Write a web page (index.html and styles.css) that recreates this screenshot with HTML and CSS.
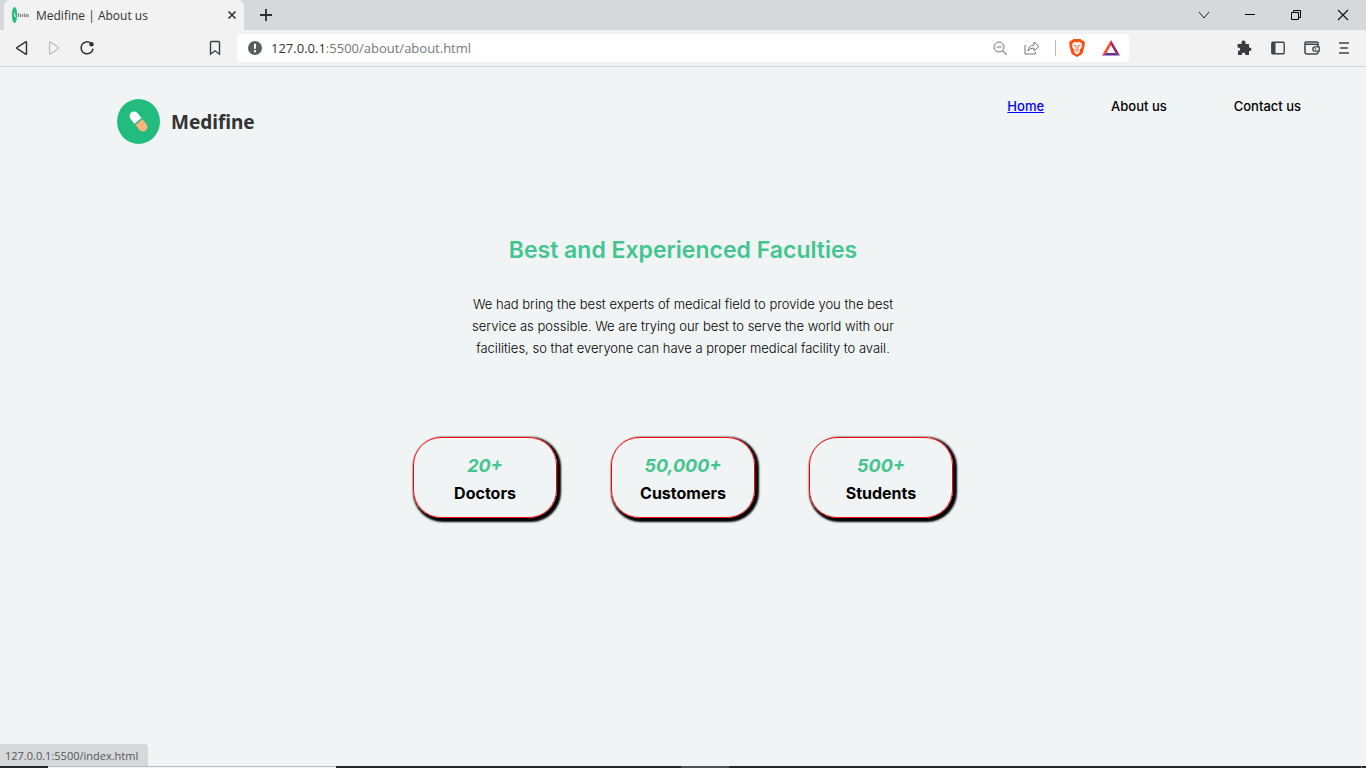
FILE: index.html
```html
<!DOCTYPE html>
<html lang="en">
<head>
<meta charset="utf-8">
<title>Medifine | About us</title>
<link rel="stylesheet" href="styles.css">
</head>
<body>
<div class="browser">
  <div class="tabstrip">
    <div class="tab">
      <svg class="favicon" width="18" height="18" viewBox="0 0 18 18"><ellipse cx="3.500" cy="9" rx="2.600" ry="8" fill="#22bd7e"/><path d="M3 7l1.500 4" stroke="#e9e7c4" stroke-width="1.200"/><path d="M7.500 7v4M9.500 8v3M11.500 8v3M13.500 7.500v3.500M15.500 8v3M17 8v3" stroke="#888" stroke-width="1.200"/></svg>
      <span class="tab-title">Medifine | About us</span>
      <button class="icon-btn" aria-label="Close tab"><svg width="10" height="10" viewBox="0 0 10 10"><path d="M1.500 1.500l7 7M8.500 1.500l-7 7" stroke="#333" stroke-width="1.600"/></svg></button>
    </div>
    <button class="icon-btn new-tab" aria-label="New tab"><svg width="12" height="12" viewBox="0 0 12 12"><path d="M6 0v12M0 6h12" stroke="#2c2e31" stroke-width="1.800"/></svg></button>
    <div class="window-controls">
      <button class="icon-btn" aria-label="Search tabs"><svg width="12" height="12" viewBox="0 0 12 12"><path d="M1 3l5 6 5-6" fill="none" stroke="#222"/></svg></button>
      <button class="icon-btn" aria-label="Minimize"><svg width="10" height="12" viewBox="0 0 10 12"><path d="M0 5.500h10" stroke="#000"/></svg></button>
      <button class="icon-btn" aria-label="Restore"><svg width="12" height="12" viewBox="0 0 12 12"><path d="M1.500 3.500h7v7h-7zM3.500 3.500v-2h7v7h-2" fill="none" stroke="#000"/></svg></button>
      <button class="icon-btn" aria-label="Close"><svg width="12" height="12" viewBox="0 0 12 12"><path d="M1 1l10 10M11 1L1 11" stroke="#111" stroke-width="1.100"/></svg></button>
    </div>
  </div>

  <div class="toolbar">
    <div class="nav-buttons">
      <button class="icon-btn" aria-label="Back"><svg width="14" height="16" viewBox="0 0 14 16"><path d="M11.500 2.200v11.600q0 .8-.8.300L2.200 8.700q-.9-.7 0-1.400l8.500-5.400q.8-.5.800.3z" fill="none" stroke="#303236" stroke-width="1.400"/></svg></button>
      <button class="icon-btn" aria-label="Forward"><svg width="14" height="16" viewBox="0 0 14 16"><path d="M2.500 2.200v11.600q0 .8.8.300l8-5.400q.9-.7 0-1.400l-8-5.400q-.8-.5-.8.300z" fill="none" stroke="#bdbdbd" stroke-width="1.200"/></svg></button>
      <button class="icon-btn" aria-label="Reload"><svg width="16" height="16" viewBox="0 0 16 16"><path d="M12 3.300A6 6 0 1 0 14 8.600" fill="none" stroke="#303236" stroke-width="1.500"/><circle cx="12.500" cy="4.300" r="2.200" fill="#303236"/></svg></button>
    </div>
    <button class="icon-btn bookmark" aria-label="Bookmark"><svg width="12" height="16" viewBox="0 0 12 16"><path d="M1.500 2.500q0-1 1-1h7q1 0 1 1v11.700L6 10.800l-4.500 3.400z" fill="none" stroke="#3b3e42" stroke-width="1.400"/></svg></button>
    <div class="address">
      <svg width="14" height="14" viewBox="0 0 14 14"><circle cx="7" cy="7" r="7" fill="#5a5e63"/><path d="M7 2.800v5" stroke="#fff" stroke-width="2"/><path d="M7 9.200v2" stroke="#fff" stroke-width="2"/></svg>
      <span class="url"><span class="host">127.0.0.1</span>:5500/about/about.html</span>
      <div class="address-actions">
        <button class="icon-btn" aria-label="Zoom"><svg width="14" height="14" viewBox="0 0 14 14"><circle cx="6" cy="6" r="5" fill="none" stroke="#777"/><path d="M3.500 6h5M9.600 9.600l4 4" stroke="#777" stroke-width="1.200"/></svg></button>
        <button class="icon-btn" aria-label="Share"><svg width="16" height="14" viewBox="0 0 16 14"><path d="M1 4v9h10.500v-2M4 10q.5-5.500 6-6V1l5 4.500-5 4.500V7Q6 7 4 10z" fill="none" stroke="#777"/></svg></button>
        <span class="divider"></span>
        <button class="icon-btn" aria-label="Brave Shields"><svg width="16" height="18" viewBox="0 0 16 18"><path d="M4.500 0h7l1.600 1.600 1.700.1 1.200 2.300-.5 1.300.2 1-1.800 7q-.3 1.300-1.500 2.100L8 18l-4.400-2.600q-1.200-.8-1.500-2.100l-1.800-7 .2-1L0 4l1.200-2.300 1.700-.1z" fill="#fb4f13"/><path d="M5 2.800l1.700.5h2.600l1.700-.5 2 2.600-.5 1.300.4 1.400-2.500 3.200.6 1.600L8 15.400l-3-2.500.6-1.600-2.500-3.200.4-1.400L3 5.400z" fill="#fff"/><path d="M4.500 6l2.500.7-.6 1.800M11.500 6L9 6.700l.6 1.800M8 7v3.500M5.900 9.900L8 11l2.100-1.100M6.500 12.800L8 12l1.500.8" fill="none" stroke="#fb6533" stroke-width=".9"/></svg></button>
        <button class="icon-btn" aria-label="Rewards"><svg width="18" height="16" viewBox="0 0 18 16"><path d="M9 0L0 15.500l4.500-2.500L9 5z" fill="#ff4724"/><path d="M9 0l9 15.500-4.500-2.500L9 5z" fill="#9e1f63"/><path d="M0 15.500h18L13.500 13h-9z" fill="#662d91"/></svg></button>
      </div>
    </div>
    <div class="tools">
      <button class="icon-btn" aria-label="Extensions"><svg width="16" height="16" viewBox="0 0 16 16"><path d="M2 4h3.500q-.5-3.500 2-3.500t2 3.500H13v3.500q2.500-.3 2.500 1.800T13 11v4H9.500q0-2.500-1.900-2.500T5.700 15H2v-4q2.200 0 2.200-1.800T1.500 7.500V4z" fill="#393c41"/></svg></button>
      <button class="icon-btn" aria-label="Sidebar"><svg width="14" height="14" viewBox="0 0 14 14"><rect x=".8" y="1.300" width="12.400" height="11.400" rx="1" fill="none" stroke="#42454a" stroke-width="1.400"/><path d="M1 1.500h3.500v11H1z" fill="#42454a"/></svg></button>
      <button class="icon-btn" aria-label="Wallet"><svg width="16" height="14" viewBox="0 0 16 14"><path d="M14 4.500V2q0-1-1-1H2Q1 1 1 2v9q0 2 2 2h9q2 0 2-2V10M1 3.300h10.500q2.500 0 2.500 2.200" fill="none" stroke="#42454a" stroke-width="1.500"/><path d="M15.200 5.800H11a2.200 2.200 0 0 0 0 4.400h4.200z" fill="#f2f2f2" stroke="#42454a" stroke-width="1.300"/><circle cx="11.500" cy="8" r=".8" fill="#42454a"/></svg></button>
      <button class="icon-btn" aria-label="Menu"><svg width="10" height="12" viewBox="0 0 10 12"><path d="M0 1h10M1 6h8M0 11h10" stroke="#42454a" stroke-width="1.500"/></svg></button>
    </div>
  </div>

  <div class="page">
    <header class="site-header">
      <div class="logo">
        <svg width="43" height="45" viewBox="0 0 43 45"><ellipse cx="21.500" cy="22.500" rx="21.500" ry="22.500" fill="#22bd7e"/><g transform="translate(21.500 22.500) rotate(-39)"><path d="M-4.500-.8V-7a4.500 4.500 0 0 1 9 0v6.200z" fill="#fff"/><path d="M-4.500.8V7a4.500 4.500 0 0 0 9 0V.8z" fill="#ffb27a"/></g></svg>
        <span class="brand">Medifine</span>
      </div>
      <nav class="menu">
        <a class="home" href="#home">Home</a>
        <a href="#about">About us</a>
        <a href="#contact">Contact us</a>
      </nav>
    </header>
    <main class="about">
      <h1 class="heading">Best and Experienced Faculties</h1>
      <p class="intro">We had bring the best experts of medical field to provide you the best service as possible. We are trying our best to serve the world with our facilities, so that everyone can have a proper medical facility to avail.</p>
      <div class="stats">
        <div class="card"><em class="number">20+</em><span class="label">Doctors</span></div>
        <div class="card"><em class="number">50,000+</em><span class="label">Customers</span></div>
        <div class="card"><em class="number">500+</em><span class="label">Students</span></div>
      </div>
    </main>
    <div class="status">127.0.0.1:5500/index.html</div>
  </div>
  <div class="taskbar"><span class="search-edge"></span><span class="active-edge"></span><span class="desktop-edge"></span></div>
</div>
</body>
</html>
```
FILE: styles.css
```css
* { box-sizing: border-box; }
body { margin: 0; font-family: Inter, "Liberation Sans", sans-serif; background: #f0f4f5; color: #000; }
.browser { display: flex; flex-direction: column; min-height: 100vh; }
.icon-btn { display: inline-flex; align-items: center; justify-content: center; padding: 0; border: 0; background: none; flex: none; }

.tabstrip { display: flex; align-items: center; height: 30px; padding-left: 4px; background: #d5d9dc; font-family: "Open Sans", "Noto Sans", sans-serif; }
.tab { display: flex; align-items: center; width: 240px; height: 30px; padding: 0 7px; background: #f2f2f2; border-radius: 6px 6px 0 0; }
.tab-title { flex: 1; margin-left: 7px; font-size: 12px; color: #333; }
.new-tab { margin-left: 16px; }
.window-controls { display: flex; gap: 35px; margin-left: auto; padding-right: 17px; }

.toolbar { display: flex; align-items: center; height: 37px; padding: 0 17px 0 15px; background: #f2f2f2; border-bottom: 1px solid #d5d9dc; font-family: "Open Sans", "Noto Sans", sans-serif; }
.nav-buttons { display: flex; gap: 18px; width: 194px; }
.address { display: flex; align-items: center; flex: 1; height: 28px; margin-left: 16px; padding: 0 9px 0 11px; background: #fff; border-radius: 4px; }
.url { margin-left: 9px; font-size: 13px; color: #777; }
.host { color: #333; }
.address-actions { display: flex; align-items: center; gap: 17px; margin-left: auto; }
.divider { width: 1px; height: 16px; margin: 0 -4px 0 -2px; background: #bbb; }
.tools { display: flex; align-items: center; gap: 19px; margin-left: 107px; }

.page { position: relative; flex: 1; }
.site-header { display: flex; justify-content: space-between; align-items: flex-start; padding: 32px 65px 0 117px; }
.logo { display: flex; align-items: center; gap: 11px; }
.brand { font-family: "Noto Sans", sans-serif; font-size: 19px; font-weight: 700; color: #333; }
.menu { display: flex; gap: 67px; font-size: 13px; font-weight: 500; line-height: 14px; }
.menu a { color: #000; text-decoration: none; }
.menu .home { color: #00f; text-decoration: underline; }

.about { display: flex; flex-direction: column; align-items: center; padding-top: 90px; }
.heading { margin: 0; font-size: 23px; line-height: 32px; font-weight: 600; color: #44c58f; }
.intro { width: 430px; margin: 27px 0 0; font-size: 13px; line-height: 22px; font-weight: 300; text-align: center; }
.stats { display: flex; gap: 54px; margin-top: 78px; }
.card { display: flex; flex-direction: column; align-items: center; justify-content: center; width: 144px; height: 81px; padding-top: 3px; border: 1px solid #f00; border-radius: 28px; box-shadow: 2px 2px 2px 2px #000; }
.number { font-size: 18px; line-height: 28px; font-weight: 700; color: #44c58f; }
.label { font-size: 16px; line-height: 26px; font-weight: 700; }

.status { position: absolute; left: 0; bottom: 0; width: 148px; padding: 3px 5px 2px; border-top-right-radius: 4px; background: #d5d9dc; font: 11px/17px "Open Sans", "Noto Sans", sans-serif; color: #555; white-space: nowrap; }
.taskbar { display: flex; height: 2px; background: #242629; }
.search-edge { width: 288px; margin-left: 48px; background: #f3f3f3; border-top: 1px solid #bbb; }
.active-edge { width: 48px; margin-left: 345px; background: #505255; }
.desktop-edge { width: 1px; margin: 0 4px 0 auto; background: #777; }
```
